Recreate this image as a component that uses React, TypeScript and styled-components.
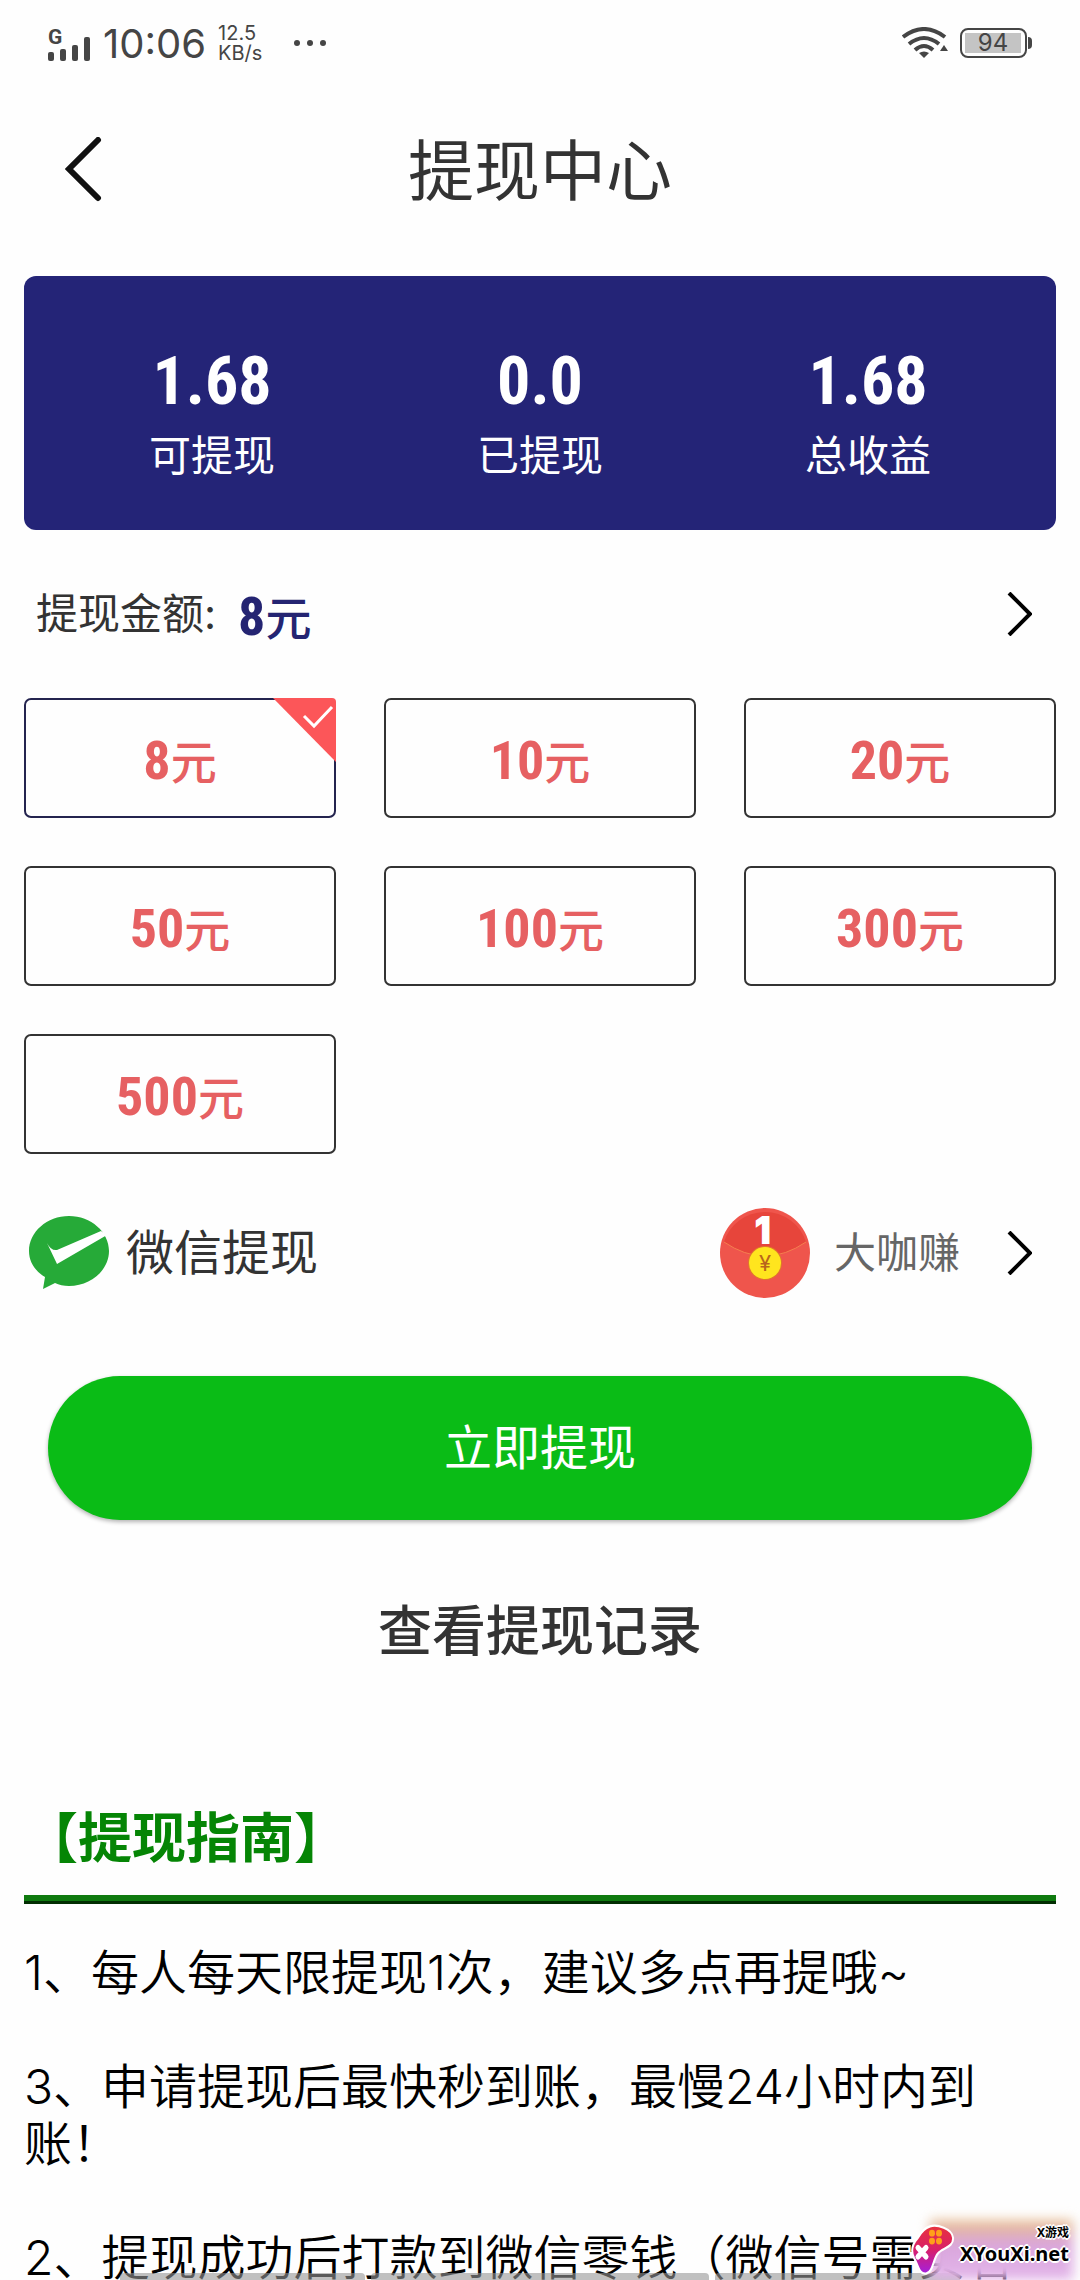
import React, { useState } from "react";
import styled, { createGlobalStyle } from "styled-components";

const sans = `Inter, "Noto Sans CJK SC", sans-serif`;
const narrow = `"Roboto Condensed", Roboto, "Noto Sans CJK SC", sans-serif`;

const Global = createGlobalStyle`
  *, *::before, *::after { box-sizing: border-box; }
  body { margin: 0; background: #fefefe; font-family: ${sans}; color: #333; }
  button { font-family: inherit; color: inherit; background: none; border: 0; padding: 0; cursor: pointer; }
  svg { display: block; flex: none; }
`;

const Screen = styled.div`
  position: relative;
  height: 100vh;
  overflow: hidden;
`;

const StatusBar = styled.div`
  display: flex;
  align-items: center;
  justify-content: space-between;
  height: 84px;
  padding: 2px 48px 0;
  color: #454545;
`;

const StatusGroup = styled.div`
  display: flex;
  align-items: center;
  gap: 12px;
`;

const Clock = styled.span`
  padding-top: 2px;
  font-size: 40px;
  line-height: 48px;
`;

const Speed = styled.span`
  display: flex;
  flex-direction: column;
  font-size: 20px;
  line-height: 20px;
`;

const Dots = styled.span`
  display: flex;
  gap: 7px;
  margin-left: 20px;

  i {
    width: 6px;
    height: 6px;
    border-radius: 50%;
    background: currentColor;
  }
`;

const Battery = styled.span`
  display: flex;
  align-items: center;
`;

const BatteryCase = styled.span`
  width: 67px;
  height: 30px;
  padding: 3px;
  border: 2px solid #454545;
  border-radius: 8px;
`;

const BatteryLevel = styled.span`
  display: block;
  width: 56px;
  height: 20px;
  background: #c4c4c4;
  font-size: 24px;
  line-height: 20px;
  text-align: center;
`;

const BatteryTip = styled.span`
  width: 4px;
  height: 12px;
  margin-left: 1px;
  border-radius: 0 4px 4px 0;
  background: #454545;
`;

const Header = styled.header`
  display: grid;
  grid-template-columns: 122px 1fr 122px;
  align-items: center;
  height: 172px;
`;

const BackButton = styled.button`
  display: flex;
  justify-content: flex-end;
  padding: 20px;
`;

const Title = styled.h1`
  margin: 0;
  padding-top: 2px;
  font-size: 66px;
  font-weight: 400;
  line-height: 80px;
  text-align: center;
`;

const Content = styled.main`
  padding: 20px 24px 0;
`;

const Summary = styled.section`
  display: grid;
  grid-template-columns: repeat(3, 1fr);
  padding: 68px 24px 46px;
  border-radius: 12px;
  background: #242477;
  color: #fff;
`;

const Stat = styled.div`
  display: flex;
  flex-direction: column;
  align-items: center;
  gap: 8px;
`;

const StatValue = styled.span`
  font-family: ${narrow};
  font-size: 66px;
  font-weight: 700;
  line-height: 76px;
`;

const StatLabel = styled.span`
  font-size: 42px;
  line-height: 56px;
`;

const Row = styled.button<{ $height: number }>`
  display: flex;
  align-items: center;
  justify-content: space-between;
  width: 100%;
  height: ${(p) => p.$height}px;
  padding: 0 24px 0 12px;
`;

const AmountLabel = styled.span`
  display: flex;
  align-items: center;
  gap: 22px;
  font-size: 42px;
  line-height: 56px;
`;

const Money = styled.span<{ $color: string }>`
  display: inline-block;
  padding-top: 8px;
  color: ${(p) => p.$color};
  font-family: ${narrow};
  font-size: 46px;
  font-weight: 500;
  line-height: 64px;

  b {
    font-size: 54px;
    font-weight: 700;
  }
`;

const Options = styled.div`
  display: grid;
  grid-template-columns: repeat(3, 1fr);
  gap: 48px;
`;

const Option = styled.button<{ $selected: boolean }>`
  position: relative;
  height: 120px;
  border: 2px solid ${(p) => (p.$selected ? "#24244f" : "#333")};
  border-radius: 7px;
`;

const Corner = styled.svg`
  position: absolute;
  top: -2px;
  right: -2px;
`;

const Payee = styled.span`
  display: flex;
  align-items: center;
  gap: 24px;
  color: #666;
  font-size: 42px;
  line-height: 56px;
`;

const Method = styled.span`
  display: flex;
  align-items: center;
  gap: 15px;
  margin-left: -9px;
  font-size: 48px;
  line-height: 56px;
`;

const Spacer = styled.span`
  flex: 1;
`;

const Chevron = styled.svg`
  margin-left: 46px;
`;

const Submit = styled.button`
  display: block;
  width: calc(100% - 48px);
  height: 144px;
  margin: 24px 24px 0;
  border-radius: 72px;
  background: #0abc16;
  box-shadow: 0 2px 4px rgba(0, 0, 0, 0.3);
  color: #fff;
  font-size: 48px;
  line-height: 56px;
`;

const RecordLink = styled.a`
  display: block;
  width: fit-content;
  margin: 72px auto 0;
  color: #333;
  font-size: 54px;
  font-weight: 500;
  line-height: 80px;
  text-decoration: none;
`;

const GuideTitle = styled.h2`
  margin: 131px 0 20px;
  color: #058505;
  font-size: 54px;
  font-weight: 700;
  line-height: 72px;
`;

const Rule = styled.hr`
  height: 9px;
  margin: 0 0 40px;
  border: 0;
  border-bottom: 3px solid #022f02;
  background: #0f7a0f;
`;

const Tip = styled.p`
  margin: 0 0 57px;
  color: #000;
  font-size: 48px;
  font-weight: 350;
  line-height: 57px;
`;

const GestureBar = styled.div`
  position: absolute;
  inset: auto 120px 0;
  display: grid;
  grid-template-columns: 244fr 338fr 244fr;
  gap: 6px;

  i {
    height: 7px;
    border-radius: 4px 4px 0 0;
    background: rgba(150, 150, 150, 0.6);
  }
`;

const Watermark = styled.div`
  position: absolute;
  right: 11px;
  bottom: 3px;
  display: flex;
  align-items: flex-end;
  gap: 4px;
`;

const Haze = styled.div`
  position: absolute;
  inset: -3px -4px -3px 20px;
  background: linear-gradient(#e9c08a, #d9a5dc 40%, #e3b6ea);
  filter: blur(6px);
`;

const Mark = styled.svg`
  position: relative;
`;

const Brand = styled.div`
  position: relative;
  display: flex;
  flex-direction: column;
  align-items: flex-end;
  padding-bottom: 10px;
  color: #000;
  font-family: "Noto Sans", "Noto Sans CJK SC", sans-serif;
  font-weight: 700;
  text-shadow: 2px 0 #fff, -2px 0 #fff, 0 2px #fff, 0 -2px #fff, 1px 1px #fff, -1px -1px #fff;

  small {
    font-size: 12px;
    line-height: 16px;
  }

  span {
    font-size: 20px;
    line-height: 26px;
  }
`;

const SignalIcon = () => (
  <svg width="43" height="38" viewBox="0 0 43 38" fill="#454545" aria-hidden="true">
    <text x="0" y="20" fontSize="21" fontWeight="700" fontFamily="Roboto, sans-serif">G</text>
    <rect x="0" y="28" width="6" height="9" rx="2" />
    <rect x="12" y="25" width="6" height="12" rx="2" />
    <rect x="24" y="21" width="6" height="16" rx="2" />
    <rect x="36" y="13" width="6" height="24" rx="2" />
  </svg>
);

const WifiIcon = () => (
  <svg width="46" height="32" viewBox="0 0 46 32" fill="none" stroke="#454545" strokeWidth="4" aria-hidden="true">
    <path d="M1 10Q22 -6 43 10M7 17Q22 5 37 17M13 23Q22 15 31 23" />
    <path d="M17 26Q22 23 27 26L22 31Z" fill="#454545" stroke="none" />
    <path d="M38 24L42 18L46 24Z" fill="#454545" stroke="none" />
  </svg>
);

const RightArrow = () => (
  <Chevron width="26" height="44" viewBox="0 0 26 44" fill="none" stroke="#000" strokeWidth="4" aria-hidden="true">
    <path d="M3 1L24 22L3 43" />
  </Chevron>
);

const WeChatIcon = () => (
  <svg width="84" height="78" viewBox="0 0 84 78" aria-hidden="true">
    <path
      d="M42 2C64 2 82 18 82 37S64 72 42 72Q34 72 28 69L16 75L18 63C8 57 2 48 2 37C2 18 20 2 42 2Z"
      fill="#26aa38"
    />
    <path d="M20 29Q24 37 30 36L74 17L80 21L30 50Z" fill="#fff" />
  </svg>
);

const PacketIcon = () => (
  <svg width="90" height="90" viewBox="0 0 90 90" aria-hidden="true">
    <circle cx="45" cy="45" r="45" fill="#ef554c" />
    <path d="M4 34A43 43 0 0 1 86 34Q45 62 4 34Z" fill="#e7453b" />
    <path d="M4 34Q45 62 86 34" fill="none" stroke="#f57f4f" strokeWidth="1" />
    <text x="43" y="35" fill="#fff" stroke="#fff" strokeWidth="2" fontSize="36" fontWeight="700" fontFamily="Inter, sans-serif" textAnchor="middle">1</text>
    <circle cx="45" cy="55" r="17" fill="#e0782c" />
    <circle cx="45" cy="55" r="16" fill="#ffe51e" />
    <text x="45" y="63" fill="#b9641c" fontSize="22" fontFamily="Inter, sans-serif" textAnchor="middle">¥</text>
  </svg>
);

const GamepadIcon = () => (
  <Mark width="46" height="54" viewBox="0 0 46 48" preserveAspectRatio="none" aria-hidden="true">
    <defs>
      <linearGradient id="pad" x1="0" y1="0" x2="0" y2="1">
        <stop offset="0" stopColor="#e8323c" />
        <stop offset="0.5" stopColor="#d81f6a" />
        <stop offset="1" stopColor="#a31fe0" />
      </linearGradient>
    </defs>
    <path
      d="M20 3C27 1 42 5 43 13C44 22 32 22 28 27C23 32 23 44 16 45C9 46 8 37 4 31C0 24 3 18 8 13Q13 5 20 3Z"
      fill="url(#pad)"
      stroke="#fff"
      strokeWidth="2"
    />
    <path d="M8 22L16 30M16 22L8 30" stroke="#fff" strokeWidth="5" strokeLinecap="round" />
    <g fill="#ff9f1a">
      <circle cx="22" cy="9" r="3" />
      <circle cx="29" cy="9" r="3" />
      <circle cx="22" cy="16" r="3" />
      <circle cx="29" cy="16" r="3" />
    </g>
  </Mark>
);

const stats = [
  { value: "1.68", label: "可提现" },
  { value: "0.0", label: "已提现" },
  { value: "1.68", label: "总收益" },
];

const amounts = [8, 10, 20, 50, 100, 300, 500];

const tips = [
  "1、每人每天限提现1次，建议多点再提哦~",
  "3、申请提现后最快秒到账，最慢24小时内到账！",
  "2、提现成功后打款到微信零钱（微信号需实名",
];

export default function App() {
  const [amount, setAmount] = useState(8);

  return (
    <Screen>
      <Global />
      <StatusBar>
        <StatusGroup>
          <SignalIcon />
          <Clock>10:06</Clock>
          <Speed>
            <span>12.5</span>
            <span>KB/s</span>
          </Speed>
          <Dots>
            <i />
            <i />
            <i />
          </Dots>
        </StatusGroup>
        <StatusGroup>
          <WifiIcon />
          <Battery>
            <BatteryCase>
              <BatteryLevel>94</BatteryLevel>
            </BatteryCase>
            <BatteryTip />
          </Battery>
        </StatusGroup>
      </StatusBar>

      <Header>
        <BackButton aria-label="返回">
          <svg width="37" height="66" viewBox="0 0 37 66" fill="none" stroke="#111" strokeWidth="6" strokeLinecap="round">
            <path d="M33 3L4 32L33 61" />
          </svg>
        </BackButton>
        <Title>提现中心</Title>
      </Header>

      <Content>
        <Summary>
          {stats.map((s) => (
            <Stat key={s.label}>
              <StatValue>{s.value}</StatValue>
              <StatLabel>{s.label}</StatLabel>
            </Stat>
          ))}
        </Summary>

        <Row $height={168}>
          <AmountLabel>
            提现金额:
            <Money $color="#242472">
              <b>{amount}</b>元
            </Money>
          </AmountLabel>
          <RightArrow />
        </Row>

        <Options>
          {amounts.map((a) => (
            <Option key={a} $selected={a === amount} aria-pressed={a === amount} onClick={() => setAmount(a)}>
              <Money $color="#e66062">
                <b>{a}</b>元
              </Money>
              {a === amount && (
                <Corner width="63" height="64" viewBox="0 0 63 64" aria-hidden="true">
                  <path d="M0 0H59Q63 0 63 4V64Z" fill="#fc5659" />
                  <path d="M31 18L41 28L59 9" fill="none" stroke="#fff" strokeWidth="3" />
                </Corner>
              )}
            </Option>
          ))}
        </Options>

        <Row $height={198}>
          <Method>
            <WeChatIcon />
            微信提现
          </Method>
          <Spacer />
          <Payee>
            <PacketIcon />
            大咖赚
          </Payee>
          <RightArrow />
        </Row>

        <Submit>立即提现</Submit>
        <RecordLink href="#records">查看提现记录</RecordLink>

        <GuideTitle>【提现指南】</GuideTitle>
        <Rule />
        {tips.map((t) => (
          <Tip key={t}>{t}</Tip>
        ))}
      </Content>

      <GestureBar>
        <i />
        <i />
        <i />
      </GestureBar>

      <Watermark>
        <Haze />
        <GamepadIcon />
        <Brand>
          <small>X游戏</small>
          <span>XYouXi.net</span>
        </Brand>
      </Watermark>
    </Screen>
  );
}
